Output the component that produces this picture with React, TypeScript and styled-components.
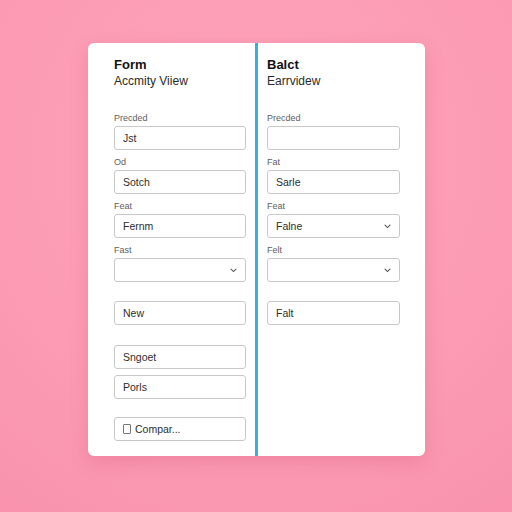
import React from 'react';
import styled, { createGlobalStyle } from 'styled-components';

const GlobalStyle = createGlobalStyle`
  html, body {
    margin: 0;
    padding: 0;
    width: 512px;
    height: 512px;
    overflow: hidden;
    font-family: "Liberation Sans", Arial, sans-serif;
  }
  body {
    background: radial-gradient(circle at 50% 30%, #fda4b9 0%, #fc9cb4 55%, #f993ad 100%);
  }
`;

const Page = styled.div`
  box-sizing: border-box;
  width: 512px;
  height: 512px;
  padding: 43px 0 0 88px;
`;

const Card = styled.div`
  display: grid;
  grid-template-columns: 167px 3px 167px;
  width: 337px;
  height: 413px;
  background: #ffffff;
  border-radius: 6px;
  box-shadow: 0 6px 18px rgba(214, 86, 120, 0.3);
  overflow: hidden;
`;

const Divider = styled.div`
  background: #38b0dc;
`;

const Column = styled.div<{ $side: 'left' | 'right' }>`
  box-sizing: border-box;
  display: flex;
  flex-direction: column;
  padding: ${(p) => (p.$side === 'left' ? '14px 9px 0 26px' : '14px 25px 0 9px')};
`;

const Title = styled.div`
  font-size: 13px;
  font-weight: 700;
  line-height: 16px;
  color: #111;
`;

const Subtitle = styled.div`
  font-size: 12px;
  line-height: 16px;
  color: #2a2a2a;
  margin-bottom: 24px;
`;

const Field = styled.div`
  display: flex;
  flex-direction: column;
  margin-bottom: 7px;
`;

const Label = styled.div`
  font-size: 9px;
  line-height: 10px;
  color: #606060;
  margin-bottom: 3px;
`;

const Box = styled.div<{ $gap?: number }>`
  box-sizing: border-box;
  height: 24px;
  display: flex;
  align-items: center;
  justify-content: space-between;
  gap: 4px;
  padding: 0 8px;
  border: 1px solid #c9c9c9;
  border-radius: 3px;
  background: #fff;
  font-size: 10.5px;
  color: #2e2e2e;
  margin-top: ${(p) => p.$gap ?? 0}px;
`;

const BoxText = styled.span`
  display: flex;
  align-items: center;
  gap: 4px;
`;

const Check = styled.span`
  box-sizing: border-box;
  width: 8px;
  height: 10px;
  border: 1px solid #777;
  border-radius: 1px;
`;

const Chevron = () => (
  <svg width="7" height="5" viewBox="0 0 7 5" fill="none">
    <path d="M1 1.2 L3.5 3.6 L6 1.2" stroke="#555" strokeWidth="1.1" strokeLinecap="round" />
  </svg>
);

type FieldProps = { label: string; value?: string; select?: boolean };

const FormField = ({ label, value, select }: FieldProps) => (
  <Field>
    <Label>{label}</Label>
    <Box>
      <BoxText>{value}</BoxText>
      {select && <Chevron />}
    </Box>
  </Field>
);

export default function App() {
  return (
    <>
      <GlobalStyle />
      <Page>
        <Card>
          <Column $side="left">
            <Title>Form</Title>
            <Subtitle>Accmity Viiew</Subtitle>
            <FormField label="Precded" value="Jst" />
            <FormField label="Od" value="Sotch" />
            <FormField label="Feat" value="Fernm" />
            <FormField label="Fast" select />
            <Box $gap={12}>
              <BoxText>New</BoxText>
            </Box>
            <Box $gap={20}>
              <BoxText>Sngoet</BoxText>
            </Box>
            <Box $gap={6}>
              <BoxText>Porls</BoxText>
            </Box>
            <Box $gap={18}>
              <BoxText>
                <Check />
                Compar...
              </BoxText>
            </Box>
          </Column>
          <Divider />
          <Column $side="right">
            <Title>Balct</Title>
            <Subtitle>Earrvidew</Subtitle>
            <FormField label="Precded" />
            <FormField label="Fat" value="Sarle" />
            <FormField label="Feat" value="Falne" select />
            <FormField label="Felt" select />
            <Box $gap={12}>
              <BoxText>Falt</BoxText>
            </Box>
          </Column>
        </Card>
      </Page>
    </>
  );
}
